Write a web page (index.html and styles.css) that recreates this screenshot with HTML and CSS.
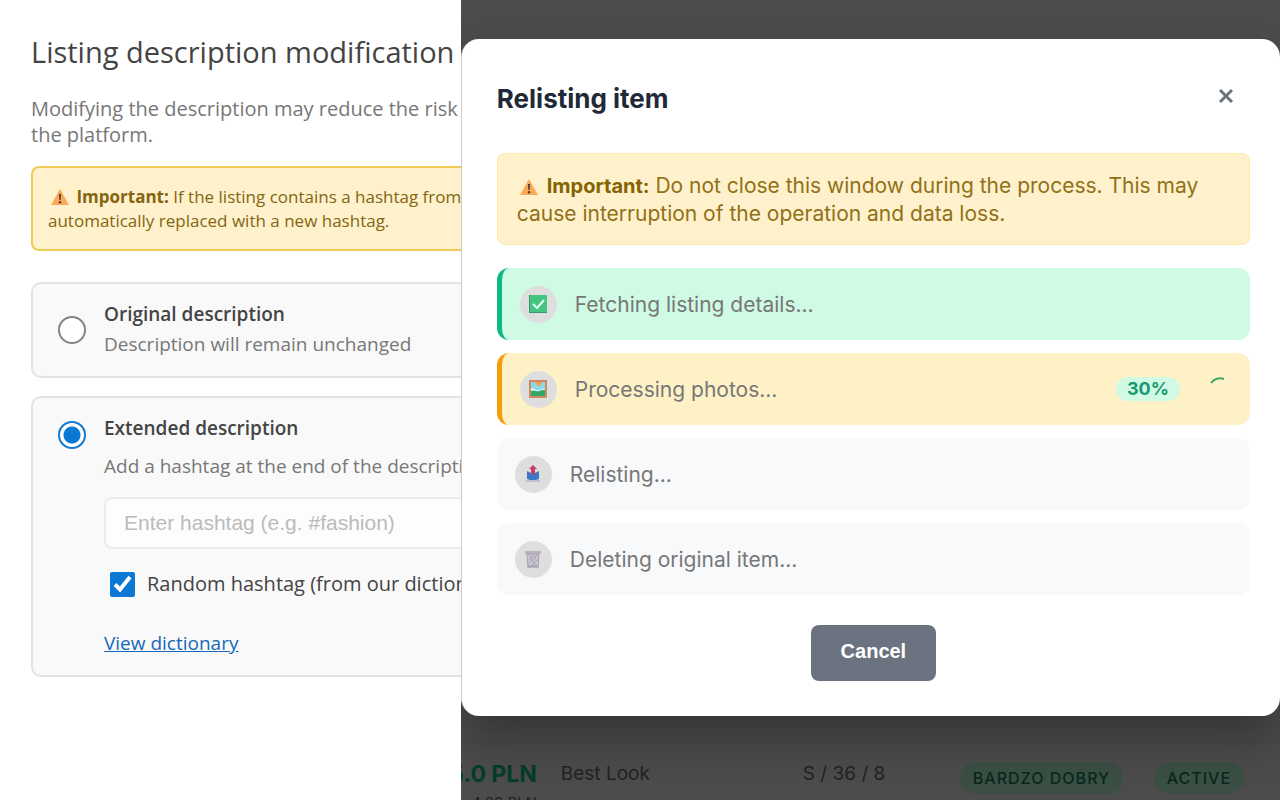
FILE: index.html
```html
<!DOCTYPE html>
<html lang="en">
<head>
    <meta charset="UTF-8">
    <meta name="viewport" content="width=device-width, initial-scale=1.0">
    <title>Relisting item</title>
    <link rel="stylesheet" href="styles.css">
</head>
<body>
    <section class="settings">
        <h1>Listing description modification</h1>
        <p class="intro">Modifying the description may reduce the risk<br>the platform.</p>

        <div class="notice">
            <svg class="warn" viewBox="0 0 20 18"><path d="M10 1 19 17H1z" fill="#fbab57"/><path d="M9 6h2l-.4 6H9.400z" fill="#4b3a35"/><circle cx="10" cy="14.200" r="1.200" fill="#4b3a35"/></svg>
            <strong>Important:</strong> If the listing contains a hashtag from<br>automatically replaced with a new hashtag.
        </div>

        <div class="option option-center">
            <input type="radio" name="mode" id="original">
            <div class="option-body">
                <label class="option-title" for="original">Original description</label>
                <p class="option-text">Description will remain unchanged</p>
            </div>
        </div>

        <div class="option">
            <input type="radio" name="mode" id="extended" checked>
            <div class="option-body">
                <label class="option-title" for="extended">Extended description</label>
                <p class="option-text hashtag-text">Add a hashtag at the end of the description</p>
                <input class="hashtag" type="text" aria-label="Hashtag" placeholder="Enter hashtag (e.g. #fashion)">
                <div class="random">
                    <input type="checkbox" id="random" checked>
                    <label for="random">Random hashtag (from our dictionary)</label>
                </div>
                <a class="dictionary" href="#">View dictionary</a>
            </div>
        </div>
    </section>

    <main class="shop">
        <div class="modal" role="dialog" aria-labelledby="modal-title">
            <header class="modal-header">
                <h2 id="modal-title">Relisting item</h2>
                <button class="close" aria-label="Close">
                    <svg viewBox="0 0 16 16"><path d="M2 2l12 12M14 2 2 14" stroke="#6b7280" stroke-width="3"/></svg>
                </button>
            </header>

            <div class="warning">
                <svg class="warn" viewBox="0 0 20 18"><path d="M10 1 19 17H1z" fill="#fbab57"/><path d="M9 6h2l-.4 6H9.400z" fill="#4b3a35"/><circle cx="10" cy="14.200" r="1.200" fill="#4b3a35"/></svg>
                <strong>Important:</strong> Do not close this window during the process. This may cause interruption of the operation and data loss.
            </div>

            <ul class="steps">
                <li class="step done">
                    <span class="step-icon">
                        <svg viewBox="0 0 18 18"><rect width="18" height="18" rx="1" fill="#43c581"/><path d="M0 0h1v17h17v1H0z" fill="#35996d"/><path d="M4 9l4 4 7-8" fill="none" stroke="#e8fff2" stroke-width="2"/></svg>
                    </span>
                    <span class="step-name">Fetching listing details...</span>
                </li>
                <li class="step active">
                    <span class="step-icon">
                        <svg viewBox="0 0 18 18"><rect width="18" height="18" fill="#cf8a60"/><rect x="2" y="2" width="14" height="14" fill="#8ed8ee"/><path d="M6 2h7l-2 4H9z" fill="#f0a044"/><path d="M2 8c3 0 4 2 7 2s4-2 7-1v3H2z" fill="#d8f4f0"/><path d="M2 11c4-1 6 1 8 0s4-1 6-1v6H2z" fill="#31a66a"/></svg>
                    </span>
                    <span class="step-name">Processing photos...</span>
                    <span class="percent">30%</span>
                    <svg class="spinner" viewBox="0 0 24 24"><circle cx="12" cy="12" r="11" fill="none" stroke="#fdf0cf" stroke-width="2"/><path d="M3 6A11 11 0 0 1 16 2" fill="none" stroke="#43a766" stroke-width="2"/></svg>
                </li>
                <li class="step">
                    <span class="step-icon">
                        <svg viewBox="0 0 18 18"><path d="M3 6l4 2h4l4-2v8l-3 1H6l-3-1z" fill="#3f77c4"/><path d="M9 0l4 4h-2v5H7V4H5z" fill="#c93d66"/><path d="M2 16h14" stroke="#a9a3cc" stroke-width="1"/></svg>
                    </span>
                    <span class="step-name">Relisting...</span>
                </li>
                <li class="step">
                    <span class="step-icon">
                        <svg viewBox="0 0 18 18"><path d="M1 1h16v3H1z" fill="#b9b3c2"/><path d="M3 4h12l-1 12H4z" fill="#cbc6d3" stroke="#a49dae"/><path d="M5 5l7 10M9 5l4 6M13 5 5 13M9 5l-4 5M13 10l-5 5" stroke="#a8a1b6" stroke-width="1"/><path d="M3 17h12" stroke="#8f8999" stroke-width="1"/></svg>
                    </span>
                    <span class="step-name">Deleting original item...</span>
                </li>
            </ul>

            <button class="cancel">Cancel</button>
        </div>

        <table class="listings">
            <tr>
                <td class="price">5.0 PLN<small>4.39 PLN</small></td>
                <td class="brand">Best Look</td>
                <td class="size">S / 36 / 8</td>
                <td class="state"><span class="tag">Bardzo dobry</span></td>
                <td class="status"><span class="tag">Active</span></td>
            </tr>
        </table>
    </main>
</body>
</html>
```

FILE: styles.css
```css
* {
    margin: 0;
    padding: 0;
    box-sizing: border-box;
}

body {
    display: grid;
    grid-template-columns: 36fr 64fr;
    height: 100vh;
    overflow: hidden;
    background: #fff;
    font-family: Inter, sans-serif;
}

/* description settings */
.settings {
    min-width: 0;
    overflow: hidden;
    padding: 32px 0 32px 31px;
    font-family: "Open Sans", "Segoe UI", sans-serif;
    white-space: nowrap;
    color: #444;
}

h1 {
    font-size: 29px;
    line-height: 40px;
    font-weight: 400;
    margin-bottom: 24px;
}

.intro {
    font-size: 20px;
    line-height: 26px;
    color: #777;
    margin-bottom: 18px;
}

.notice {
    padding: 17px 15px 16px;
    border: 2px solid #efcb55;
    border-right: none;
    border-radius: 8px 0 0 8px;
    background: #fef1cc;
    color: #846611;
    font-size: 17px;
    line-height: 24px;
    margin-bottom: 31px;
}

.warn {
    width: 20px;
    height: 18px;
    margin: 0 2px;
    vertical-align: -3px;
}

.option {
    display: flex;
    gap: 18px;
    padding: 17px 0 17px 25px;
    border: 2px solid #e3e3e3;
    border-right: none;
    border-radius: 10px 0 0 10px;
    background: #f9f9f9;
    margin-bottom: 18px;
}

.option-center {
    align-items: center;
}

.option-body {
    flex: 1;
    min-width: 0;
}

.option-title {
    display: block;
    font-size: 19px;
    line-height: 26px;
    font-weight: 600;
}

.option-text {
    margin-top: 2px;
    font-size: 19px;
    line-height: 30px;
    color: #777;
}

.hashtag-text {
    margin: 10px 0 16px;
}

input[type="radio"] {
    appearance: none;
    flex: none;
    width: 28px;
    height: 28px;
    border: 2px solid #858585;
    border-radius: 50%;
    background: #fff;
}

input[type="radio"]:checked {
    margin-top: 6px;
    border-color: #1478cf;
    background: radial-gradient(circle, #0b78d4 8px, #fff 9px);
}

.hashtag {
    display: block;
    width: 100%;
    height: 52px;
    padding: 0 18px;
    border: 2px solid #ececec;
    border-right: none;
    border-radius: 8px 0 0 8px;
    background: #fdfdfd;
    font: 21px "Liberation Sans", Arial, sans-serif;
}

.hashtag::placeholder {
    color: #bbb;
}

.random {
    display: flex;
    align-items: center;
    gap: 12px;
    margin: 20px 0 29px 6px;
    font-size: 20px;
    line-height: 30px;
}

input[type="checkbox"] {
    flex: none;
    width: 25px;
    height: 25px;
    accent-color: #0b78d4;
}

.dictionary {
    display: block;
    width: max-content;
    font-size: 19px;
    line-height: 30px;
    color: #1469b8;
}

/* shop page dimmed behind the modal */
.shop {
    min-width: 0;
    overflow: hidden;
    padding-top: 39px;
    background: #4c4c4c;
}

.modal {
    position: relative;
    padding: 36px 30px 35px 35px;
    border-left: 1px solid #ccc;
    border-radius: 18px;
    background: #fff;
    box-shadow: 0 24px 48px rgba(0, 0, 0, 0.3);
}

.modal-header {
    display: flex;
    justify-content: space-between;
    align-items: flex-start;
    margin-bottom: 30px;
}

h2 {
    font-size: 26px;
    line-height: 48px;
    font-weight: 700;
    color: #1f2937;
}

.close {
    width: 48px;
    height: 42px;
    border: none;
    background: none;
    cursor: pointer;
}

.close svg {
    width: 16px;
    height: 16px;
    vertical-align: middle;
}

.warning {
    padding: 18px 19px 17px;
    border: 1px solid #fce8a6;
    border-radius: 8px;
    background: #fef1cc;
    color: #917017;
    font-size: 21px;
    line-height: 27px;
    margin-bottom: 23px;
}

.warning strong {
    font-size: 20px;
    color: #846400;
}

.steps {
    display: flex;
    flex-direction: column;
    gap: 13px;
    list-style: none;
}

.step {
    display: flex;
    align-items: center;
    gap: 18px;
    height: 72px;
    padding: 0 18px;
    border-radius: 12px;
    background: #f8f9fb;
    color: #777;
    font-size: 21px;
}

.done {
    border-left: 5px solid #10b981;
    background: #cffae3;
}

.active {
    border-left: 5px solid #f59e0b;
    background: #fef1c6;
}

.step-icon {
    display: flex;
    align-items: center;
    justify-content: center;
    width: 37px;
    height: 37px;
    border-radius: 50%;
    background: #dedede;
}

.step-icon svg {
    width: 18px;
    height: 18px;
}

.step-name {
    flex: 1;
}

.percent {
    padding: 0 11px;
    border-radius: 12px;
    background: #d1fae5;
    color: #169b6e;
    font-size: 18px;
    line-height: 24px;
    font-weight: 700;
}

.spinner {
    width: 24px;
    height: 24px;
    margin-left: 10px;
}

.cancel {
    display: block;
    margin: 30px auto 0;
    padding: 0 30px 4px;
    border: none;
    border-radius: 8px;
    background: #6b7280;
    color: #fff;
    font: 700 20px/52px "Liberation Sans", Arial, sans-serif;
    cursor: pointer;
}

.listings {
    width: calc(100% + 24px);
    margin: 26px 0 0 -24px;
    border-collapse: collapse;
    border-top: 1px solid #444;
    color: #202226;
    font-size: 19px;
    table-layout: fixed;
    white-space: nowrap;
}

td {
    height: 64px;
    vertical-align: top;
    padding-top: 19px;
    line-height: 24px;
}

.price {
    width: 124px;
    text-align: right;
    padding-right: 24px;
    font-size: 23px;
    font-weight: 700;
    color: #053c2a;
}

.price small {
    display: block;
    margin-top: 5px;
    font-size: 15px;
    font-weight: 400;
    color: #202226;
}

.brand {
    width: 242px;
}

.size {
    width: 157px;
}

.state {
    width: 194px;
}

.tag {
    display: inline-block;
    padding: 0 13px;
    border-radius: 16px;
    background: #3b4f45;
    color: #08271c;
    font-size: 16px;
    line-height: 32px;
    font-weight: 500;
    letter-spacing: 1px;
    text-transform: uppercase;
}
```
